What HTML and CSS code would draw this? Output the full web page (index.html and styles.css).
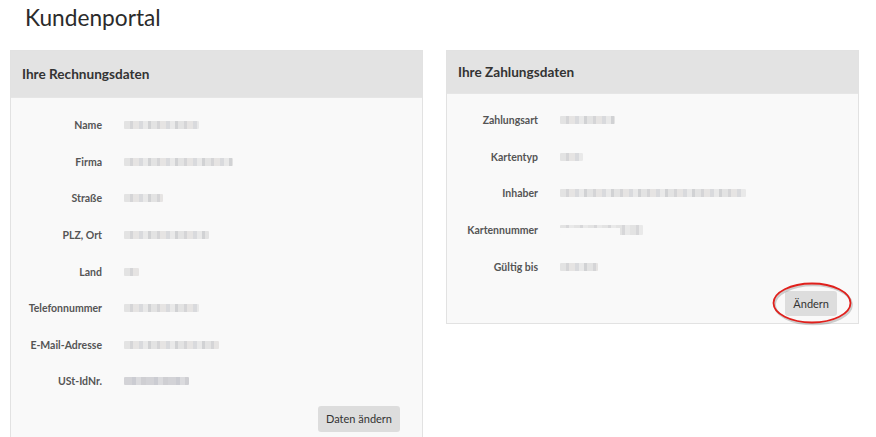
FILE: index.html
```html
<!DOCTYPE html>
<html lang="de">
<head>
<meta charset="utf-8">
<title>Kundenportal</title>
<link rel="stylesheet" href="styles.css">
</head>
<body>
<h1 class="title">Kundenportal</h1>
<div class="panels">
  <section class="panel panel-left">
    <header class="panel-head head-left">Ihre Rechnungsdaten</header>
    <div class="panel-body body-left">
      <div class="row"><span class="label">Name</span><span class="blur" style="width:75px"></span></div>
      <div class="row"><span class="label">Firma</span><span class="blur" style="width:109px"></span></div>
      <div class="row"><span class="label">Straße</span><span class="blur" style="width:39px"></span></div>
      <div class="row"><span class="label">PLZ, Ort</span><span class="blur" style="width:85px"></span></div>
      <div class="row"><span class="label">Land</span><span class="blur" style="width:15px"></span></div>
      <div class="row"><span class="label">Telefonnummer</span><span class="blur" style="width:75px"></span></div>
      <div class="row"><span class="label">E-Mail-Adresse</span><span class="blur" style="width:95px"></span></div>
      <div class="row"><span class="label">USt-IdNr.</span><span class="blur dark" style="width:65px"></span></div>
      <div class="actions actions-left"><button class="btn">Daten ändern</button></div>
    </div>
  </section>
  <section class="panel panel-right">
    <header class="panel-head head-right">Ihre Zahlungsdaten</header>
    <div class="panel-body body-right">
      <div class="row"><span class="label">Zahlungsart</span><span class="blur" style="width:55px"></span></div>
      <div class="row"><span class="label">Kartentyp</span><span class="blur" style="width:23px"></span></div>
      <div class="row"><span class="label">Inhaber</span><span class="blur" style="width:186px"></span></div>
      <div class="row"><span class="label">Kartennummer</span><span class="blur card" style="width:83px"></span></div>
      <div class="row"><span class="label">Gültig bis</span><span class="blur" style="width:38px"></span></div>
      <div class="actions actions-right">
        <span class="btn-wrap">
          <button class="btn">Ändern</button>
          <svg class="ring" width="84" height="46" viewBox="0 0 84 46">
            <ellipse cx="41" cy="21" rx="38.5" ry="19.5" fill="none" stroke="rgba(0,0,0,0.18)" stroke-width="2.4" transform="translate(1.2 1.6)"/>
            <ellipse cx="41" cy="21" rx="38.5" ry="19.5" fill="none" stroke="#e0201c" stroke-width="1.8"/>
          </svg>
        </span>
      </div>
    </div>
  </section>
</div>
</body>
</html>
```
FILE: styles.css
```css
html, body {
  margin: 0;
  padding: 0;
  background: #ffffff;
  font-family: Lato, "Open Sans", "Liberation Sans", sans-serif;
  color: #333;
}

.title {
  margin: 0;
  padding: 3px 0 0 25px;
  height: 47px;
  box-sizing: border-box;
  font-size: 22.7px;
  font-weight: 400;
  line-height: 30px;
  color: #2b2b2b;
}

.panels {
  display: flex;
  align-items: flex-start;
  gap: 23px;
  padding: 3px 0 0 10px;
}

.panel {
  width: 413px;
  box-sizing: border-box;
  border: 1px solid #e2e2e2;
  background: #f9f9f9;
}

.panel-left {
  height: 400px;
  border-bottom: none;
}

.panel-head {
  background: #e3e3e3;
  font-size: 13.6px;
  font-weight: 700;
  color: #333;
  padding-left: 11px;
  display: flex;
  align-items: center;
  border-bottom: 1px solid #e6e6e6;
}

.head-left {
  height: 46px;
}

.head-right {
  height: 43px;
  padding-bottom: 1px;
  box-sizing: border-box;
}

.panel-body {
  display: flex;
  flex-direction: column;
}

.body-left {
  padding-top: 9px;
}

.body-right {
  padding-top: 8px;
  padding-bottom: 7px;
}

.row {
  height: 36.6px;
  display: flex;
  align-items: center;
  gap: 22px;
}

.label {
  width: 91px;
  text-align: right;
  font-size: 10.5px;
  font-weight: 700;
  color: #555;
  flex: none;
}

.blur {
  display: inline-block;
  height: 8px;
  border-radius: 1px;
  background:
    repeating-linear-gradient(90deg,
      #e2e2e2 0 6px, #d4d4d6 6px 9px, #e6e3e2 9px 15px,
      #d8d9dc 15px 19px, #e9e9e9 19px 24px, #cfd0d3 24px 27px);
  filter: blur(0.6px);
  opacity: 0.95;
}

.blur.dark {
  background:
    repeating-linear-gradient(90deg,
      #d2d2d6 0 8px, #c9cad0 8px 12px, #dadadd 12px 17px, #cdcdd2 17px 22px);
}

.blur.card {
  height: 10px;
  background:
    linear-gradient(#f9f9f9, #f9f9f9) 0 3px / 60px 7px no-repeat,
    repeating-linear-gradient(90deg, #e2e2e2 0 6px, #d6d6d8 6px 9px, #e9e9e9 9px 14px);
}

.actions {
  display: flex;
  justify-content: flex-end;
}

.actions-left {
  padding: 6px 22px 0 0;
}

.actions-right {
  padding: 6px 21px 0 0;
}

.btn {
  font-family: Lato, "Open Sans", "Liberation Sans", sans-serif;
  font-size: 11px;
  color: #333;
  background: #dddddd;
  border: none;
  border-radius: 3px;
  height: 26px;
  padding: 0 8px;
  cursor: pointer;
}

.actions-right .btn {
  height: 25px;
  padding: 0 8px;
}

.btn-wrap {
  position: relative;
  display: inline-block;
}

.ring {
  position: absolute;
  right: -18px;
  top: -9px;
  pointer-events: none;
}
```
